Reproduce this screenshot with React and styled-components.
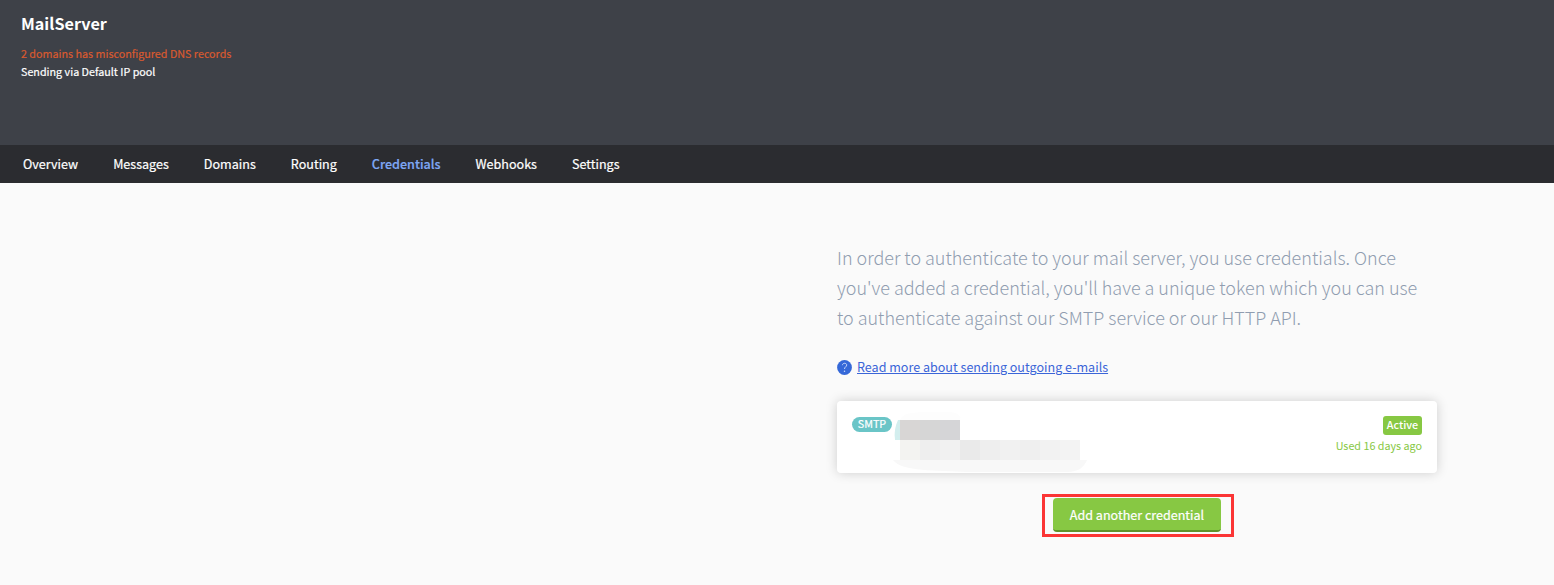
import React from "react";
import styled, { createGlobalStyle } from "styled-components";

const GlobalStyle = createGlobalStyle`
  * { box-sizing: border-box; }
  body {
    margin: 0;
    background: #fafafa;
    font-family: "Source Sans Pro", "Noto Sans CJK SC", sans-serif;
    font-size: 12.5px;
  }
`;

const Header = styled.header`
  height: 145px;
  padding: 13px 21px 0;
  background: #3e4148;
  color: #fff;
`;

const Title = styled.h1`
  margin: 0 0 11px;
  font-size: 16.2px;
  line-height: 21px;
  font-weight: 700;
`;

const Status = styled.p`
  margin: 0;
  font-size: 10.75px;
  line-height: 18px;
  font-weight: 400;
  color: ${(p) => (p.$warning ? "#da5a2f" : "#fff")};
  -webkit-text-stroke: 0.2px currentColor;
`;

const Nav = styled.nav`
  display: flex;
  gap: 35px;
  height: 38px;
  padding: 0 23px;
  background: #2b2c30;
`;

const NavItem = styled.a`
  font-size: 12.57px;
  line-height: 38px;
  font-weight: ${(p) => (p.$active ? 500 : 400)};
  color: ${(p) => (p.$active ? "#7fa8f5" : "#fff")};
  -webkit-text-stroke: 0.2px currentColor;
`;

const Content = styled.main`
  width: 600px;
  margin: 59px 0 0 837px;
`;

const Intro = styled.p`
  margin: 0;
  font-size: 17.97px;
  line-height: 30px;
  font-weight: 300;
  color: #909db0;
  white-space: nowrap;
`;

const HelpRow = styled.div`
  display: flex;
  align-items: center;
  gap: 5px;
  height: 20px;
  margin-top: 25px;
`;

const HelpLink = styled.a`
  font-size: 12.56px;
  line-height: 20px;
  color: #3b65d8;
  text-decoration: underline;
  text-underline-offset: 1px;
  text-decoration-thickness: 1px;
`;

const Card = styled.section`
  display: flex;
  align-items: flex-start;
  height: 72px;
  margin-top: 24px;
  padding: 0 15px;
  border-radius: 4px;
  background: #fff;
  box-shadow: 0 0 12px rgba(0, 0, 0, 0.18);
`;

const TypeLabel = styled.span`
  width: 40px;
  height: 15px;
  margin-top: 16px;
  border-radius: 8px;
  background: #6ac5c7;
  color: #fff;
  font-size: 10.75px;
  line-height: 14px;
  font-weight: 400;
  text-align: center;
  -webkit-text-stroke: 0.2px currentColor;
`;

const Redaction = styled.svg`
  display: block;
  width: 196px;
  height: 72px;
`;

const State = styled.div`
  display: flex;
  flex-direction: column;
  align-items: flex-end;
  margin: 15px 0 0 auto;
`;

const ActiveBadge = styled.span`
  width: 39px;
  height: 19px;
  border-radius: 3px;
  background: #87c843;
  color: #fff;
  font-size: 10.75px;
  line-height: 18px;
  font-weight: 500;
  text-align: center;
`;

const LastUsed = styled.span`
  margin-top: 2px;
  color: #87c843;
  font-size: 10.75px;
  line-height: 18px;
`;

const Highlight = styled.div`
  display: flex;
  justify-content: center;
  width: 192px;
  height: 43px;
  margin: 21px 0 0 205px;
  padding-top: 1px;
  border: 3px solid #fb3535;
`;

const AddButton = styled.button`
  width: 168px;
  height: 34px;
  margin-right: 2px;
  padding: 2px 0 0;
  border: 0;
  border-bottom: 2px solid #5f932b;
  border-radius: 4px;
  background: #87c843;
  color: #fff;
  font-family: inherit;
  font-size: 12.56px;
  line-height: 30px;
  font-weight: 400;
  -webkit-text-stroke: 0.2px currentColor;
`;

const navItems = ["Overview", "Messages", "Domains", "Routing", "Credentials", "Webhooks", "Settings"];
const nameCells = ["#d8d6d5", "#d6d6d6", "#d5d5d7"];
const keyCells = ["#f3f3f1", "#eeeeee", "#f1f1f1", "#eaeaea", "#eeeeee", "#f1f1f1", "#efefef", "#f2f2f2", "#f3f3f3"];

function HelpIcon() {
  return (
    <svg width="15" height="15" viewBox="0 0 15 15">
      <circle cx="7.5" cy="7.5" r="7.4" fill="#3568d8" />
      <path d="M5.4 5.2C5.5 2.7 9.7 2.6 9.7 5.1C9.7 6.8 7.5 6.9 7.5 9" fill="none" stroke="#c9d8fb" strokeWidth="1" />
      <circle cx="7.5" cy="11.2" r="0.75" fill="#c9d8fb" />
    </svg>
  );
}

function RedactedDetails() {
  return (
    <Redaction viewBox="0 0 196 72">
      <path d="M8 19C10 13 18 11 36 11H56C65 11 69 14 68 19Z" fill="#fdfdfd" />
      <path d="M8 19H6C3 25 2 32 3 39H8Z" fill="#d3eeee" />
      <path d="M1 59H195C192 66 187 71 175 71H75C45 69 10 71 1 59Z" fill="#f8f8f8" />
      {nameCells.map((fill, i) => (
        <rect key={i} x={8 + i * 20} y="19" width="20" height="20" fill={fill} />
      ))}
      {keyCells.map((fill, i) => (
        <rect key={i} x={8 + i * 20} y="39" width="20" height="20" fill={fill} />
      ))}
    </Redaction>
  );
}

export default function App() {
  return (
    <>
      <GlobalStyle />
      <Header>
        <Title>MailServer</Title>
        <Status $warning>2 domains has misconfigured DNS records</Status>
        <Status>Sending via Default IP pool</Status>
      </Header>
      <Nav>
        {navItems.map((item) => (
          <NavItem key={item} $active={item === "Credentials"}>{item}</NavItem>
        ))}
      </Nav>
      <Content>
        <Intro>
          In order to authenticate to your mail server, you use credentials. Once<br />
          you've added a credential, you'll have a unique token which you can use<br />
          to authenticate against our SMTP service or our HTTP API.
        </Intro>
        <HelpRow>
          <HelpIcon />
          <HelpLink>Read more about sending outgoing e-mails</HelpLink>
        </HelpRow>
        <Card>
          <TypeLabel>SMTP</TypeLabel>
          <RedactedDetails />
          <State>
            <ActiveBadge>Active</ActiveBadge>
            <LastUsed>Used 16 days ago</LastUsed>
          </State>
        </Card>
        <Highlight>
          <AddButton>Add another credential</AddButton>
        </Highlight>
      </Content>
    </>
  );
}
